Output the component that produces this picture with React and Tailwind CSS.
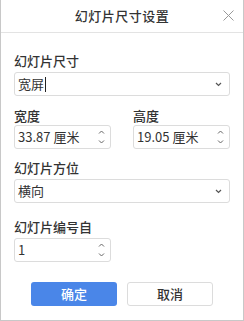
import React from "react";

const font = { fontFamily: '"Noto Sans CJK SC", "Noto Sans", sans-serif' };

function Chevron() {
  return (
    <svg width="7" height="5" viewBox="0 0 7 5" className="shrink-0">
      <path d="M1 1 L3.5 3.5 L6 1" fill="none" stroke="#555" strokeWidth="1.2" />
    </svg>
  );
}

function Spinner() {
  return (
    <div className="flex flex-col items-center gap-[6px] shrink-0">
      <svg width="7" height="4" viewBox="0 0 7 4">
        <path d="M1 3.5 L3.5 1 L6 3.5" fill="none" stroke="#666" strokeWidth="1" />
      </svg>
      <svg width="7" height="4" viewBox="0 0 7 4">
        <path d="M1 0.5 L3.5 3 L6 0.5" fill="none" stroke="#666" strokeWidth="1" />
      </svg>
    </div>
  );
}

function Label({ children, className = "" }) {
  return (
    <div className={"text-[13px] leading-[17px] font-medium text-[#333] " + className}>{children}</div>
  );
}

function Select({ value, cursor }) {
  return (
    <div className="h-[24px] rounded-[3px] border border-[#dcdcdc] flex items-center pl-[3px] pr-[7px] justify-between">
      <div className="flex items-center text-[13px] text-[#333]">
        <span>{value}</span>
        {cursor && <span className="w-px h-[15px] bg-[#222] ml-[1px]" />}
      </div>
      <Chevron />
    </div>
  );
}

function NumberInput({ value }) {
  return (
    <div className="h-[24px] w-[97px] rounded-[3px] border border-[#dcdcdc] flex items-center pl-[3px] pr-[5px] justify-between">
      <span className="text-[13px] text-[#333]">{value}</span>
      <Spinner />
    </div>
  );
}

export default function App() {
  return (
    <div style={font} className="w-[244px] h-[321px] bg-white border-x border-b border-[#c8c8c8] flex flex-col">
      <div className="h-[33px] border-b border-[#e3e3e3] flex items-center justify-center relative shrink-0">
        <span className="text-[13px] font-medium text-[#333] tracking-[0.5px]">幻灯片尺寸设置</span>
        <svg className="absolute right-[9px] top-[10px]" width="11" height="11" viewBox="0 0 11 11">
          <path d="M0.5 0.5 L10.5 10.5 M10.5 0.5 L0.5 10.5" stroke="#999" strokeWidth="1" />
        </svg>
      </div>
      <div className="px-[13px] pt-[19px] flex flex-col">
        <Label>幻灯片尺寸</Label>
        <div className="mt-[3px]">
          <Select value="宽屏" cursor />
        </div>
        <div className="mt-[11px] flex gap-[22px]">
          <div className="flex flex-col">
            <Label>宽度</Label>
            <div className="mt-[1px]">
              <NumberInput value="33.87 厘米" />
            </div>
          </div>
          <div className="flex flex-col">
            <Label>高度</Label>
            <div className="mt-[1px]">
              <NumberInput value="19.05 厘米" />
            </div>
          </div>
        </div>
        <Label className="mt-[10px]">幻灯片方位</Label>
        <div className="mt-[3px]">
          <Select value="横向" />
        </div>
        <Label className="mt-[15px]">幻灯片编号自</Label>
        <div className="mt-[3px]">
          <NumberInput value="1" />
        </div>
        <div className="mt-[20px] flex justify-center gap-[10px]">
          <button className="w-[86px] h-[24px] rounded-[3px] bg-[#4a86e8] text-white text-[13px] font-medium">确定</button>
          <button className="w-[86px] h-[24px] rounded-[3px] border border-[#dcdcdc] bg-white text-[#333] text-[13px] font-medium">取消</button>
        </div>
      </div>
    </div>
  );
}
